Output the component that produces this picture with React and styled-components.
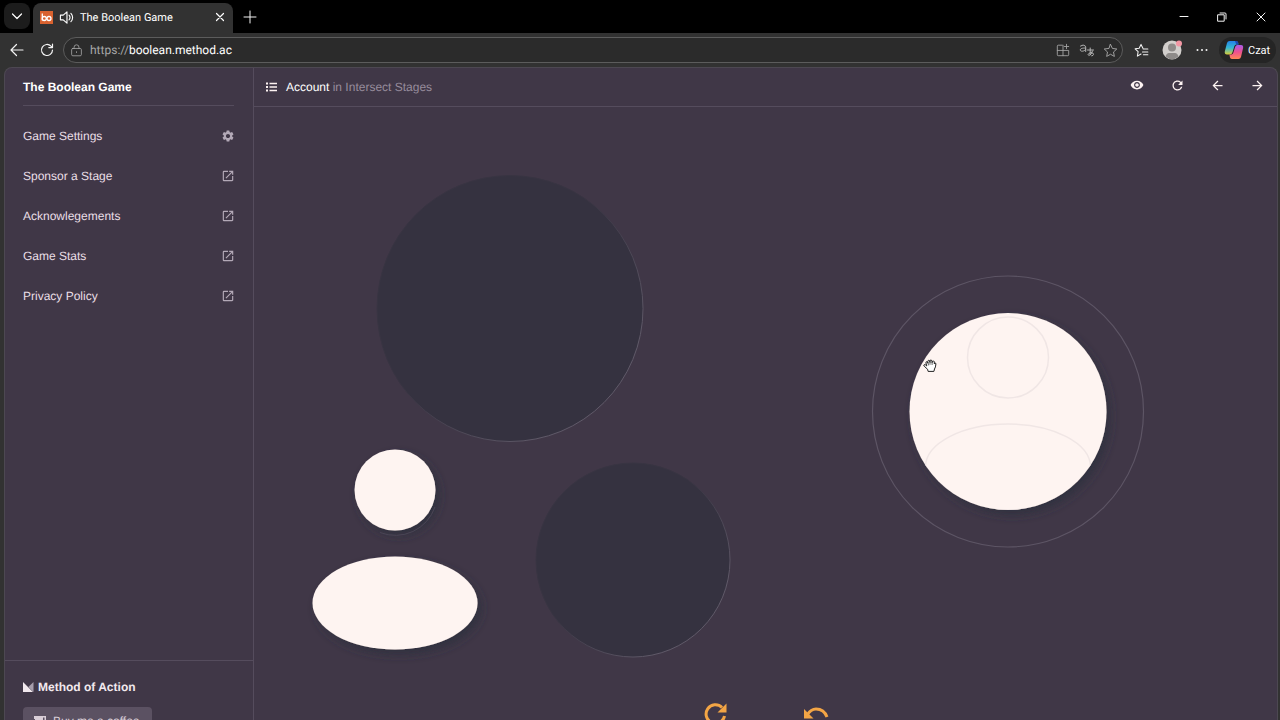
import React from "react";
import styled, { createGlobalStyle } from "styled-components";
import {
  MdSettings,
  MdOpenInNew,
  MdVisibility,
  MdRefresh,
  MdArrowBack,
  MdArrowForward,
} from "react-icons/md";

const Global = createGlobalStyle`
  * { box-sizing: border-box; }
  html, body { margin: 0; height: 100%; overflow: hidden; background: #000; }
  #root { height: 100%; }
  button, input { font: inherit; color: inherit; border: 0; background: none; padding: 0; margin: 0; }
  svg { display: block; flex: none; }
`;

const Browser = styled.div`
  display: flex;
  flex-direction: column;
  min-height: calc(100vh + 40px);
  background: #323232;
  color: #fff;
  font-family: "Liberation Sans", Arial, sans-serif;
  text-rendering: geometricPrecision;
`;

const TabStrip = styled.header`
  display: flex;
  align-items: flex-end;
  height: 33px;
  background: #000;
  font-family: Roboto, "Open Sans", sans-serif;
`;

const TabSearch = styled.button`
  display: grid;
  place-items: center;
  width: 26px;
  height: 26px;
  margin: 0 3px 4px 4px;
  border-radius: 8px;
  background: #1c1c1c;
`;

const Tab = styled.div`
  display: flex;
  align-items: center;
  width: 200px;
  height: 30px;
  padding: 0 8px 2px 7px;
  border-radius: 8px 8px 0 0;
  background: #323232;
  font-size: 11px;
`;

const TabTitle = styled.span`
  flex: 1;
  margin-left: 6px;
  white-space: nowrap;
`;

const Favicon = styled.svg`
  margin-right: 6px;
`;

const PlainButton = styled.button`
  display: grid;
  place-items: center;
  width: ${(p) => p.$w || 30}px;
  height: ${(p) => p.$h || 30}px;
  color: ${(p) => p.$tone || "#f4f4f4"};
`;

const WindowControls = styled.div`
  display: flex;
  margin-left: auto;
  align-self: center;
`;

const Toolbar = styled.nav`
  display: flex;
  align-items: center;
  height: 34px;
  padding: 0 4px 0 2px;
`;

const AddressBar = styled.div`
  display: flex;
  flex: 1;
  align-items: center;
  height: 26px;
  padding: 0 0 0 6px;
  margin-left: 1px;
  border: 1px solid #5c5c5c;
  border-radius: 13px;
  background: #2b2b2b;
  color: #a8a8a8;
  font-family: Roboto, "Open Sans", sans-serif;
  font-size: 12px;
`;

const Url = styled.span`
  flex: 1;
  margin-left: 7px;
  b { color: #fff; font-weight: 400; }
`;

const ChatButton = styled.button`
  display: flex;
  align-items: center;
  gap: 4px;
  width: 57px;
  height: 26px;
  padding-left: 5px;
  border-radius: 13px;
  background: #252525;
  font-family: Roboto, "Open Sans", sans-serif;
  font-size: 11px;
`;

const Site = styled.div`
  display: flex;
  flex: 1;
  margin: 0 2px 0 4px;
  border: 1px solid #4d4852;
  border-bottom: 0;
  border-radius: 8px 8px 0 0;
  background: #403747;
  font-size: 12px;
`;

const Sidebar = styled.aside`
  display: flex;
  flex-direction: column;
  width: 249px;
  border-right: 1px solid #554c5d;
`;

const Brand = styled.h1`
  height: 38px;
  margin: 0 19px 10px 18px;
  border-bottom: 1px solid #554c5d;
  font-size: 12px;
  line-height: 38px;
`;

const Menu = styled.ul`
  list-style: none;
  margin: 0;
  padding: 0;
`;

const MenuLink = styled.a`
  display: flex;
  align-items: center;
  justify-content: space-between;
  height: 40px;
  padding: 0 18px;
  color: #eadfe6;
  text-decoration: none;
  svg { color: #b3a9b7; }
`;

const SideFooter = styled.footer`
  height: 100px;
  margin-top: auto;
  padding: 16px 18px 0;
  border-top: 1px solid #554c5d;
`;

const Studio = styled.a`
  display: flex;
  align-items: center;
  gap: 4px;
  height: 20px;
  color: #f2e9ee;
  font-weight: 700;
  text-decoration: none;
`;

const CoffeeLink = styled.a`
  display: inline-flex;
  align-items: center;
  gap: 7px;
  height: 28px;
  margin-top: 10px;
  padding: 0 12px 0 11px;
  border-radius: 4px;
  background: #5b5162;
  color: #d9ced7;
  text-decoration: none;
`;

const Main = styled.main`
  display: flex;
  flex: 1;
  flex-direction: column;
  min-width: 0;
`;

const StageBar = styled.div`
  display: flex;
  align-items: center;
  height: 39px;
  padding: 0 0 0 12px;
  border-bottom: 1px solid #554c5d;
`;

const StageTitle = styled.h2`
  flex: 1;
  margin: 0 0 0 8px;
  font-size: 12px;
  font-weight: 400;
  color: #978c9c;
  b { color: #fff; font-weight: 400; }
`;

const StageButton = styled.button`
  display: grid;
  place-items: center;
  align-self: flex-start;
  width: 40px;
  height: 34px;
  color: #fdf3f2;
`;

const Board = styled.svg`
  width: 100%;
  height: auto;
`;

const Actions = styled.div`
  display: flex;
  justify-content: center;
  gap: 72px;
  padding-top: 2px;
`;

const ActionButton = styled.button`
  display: grid;
  place-items: center;
  width: 28px;
  height: 28px;
  color: #f3a545;
`;

const Stroke = ({ size = 16, width = 1, children, box = 16 }) => (
  <svg width={size} height={size} viewBox={`0 0 ${box} ${box}`} fill="none" stroke="currentColor" strokeWidth={width} strokeLinecap="round" strokeLinejoin="round" aria-hidden="true">
    {children}
  </svg>
);

const links = ["Sponsor a Stage", "Acknowlegements", "Game Stats", "Privacy Policy"];

function BrowserChrome() {
  return (
    <>
      <TabStrip>
        <TabSearch aria-label="Search tabs">
          <Stroke size={12} box={12} width={1.2}><path d="M1.500 4l4.500 4.500L10.500 4" /></Stroke>
        </TabSearch>
        <Tab>
          <Favicon width="13" height="13" viewBox="0 0 13 13" aria-hidden="true">
            <rect width="13" height="13" fill="#d9622f" />
            <g fill="none" stroke="#fff" strokeWidth="1.300">
              <path d="M2.300 2.500v7" />
              <circle cx="4.300" cy="7.500" r="2" />
              <circle cx="9" cy="7.500" r="2" />
            </g>
          </Favicon>
          <Stroke size={15} width={1.2}>
            <path d="M1.500 5.500h3L8.500 2v12L4.500 10.500h-3zM10.700 5.500a3.500 3.500 0 0 1 0 5M12.700 3.500a6.500 6.500 0 0 1 0 9" />
          </Stroke>
          <TabTitle>The Boolean Game</TabTitle>
          <Stroke size={10} box={10} width={1.2}><path d="M1.500 1.500l7 7M8.500 1.500l-7 7" /></Stroke>
        </Tab>
        <PlainButton $w={34} $h={32} aria-label="New tab">
          <Stroke size={14} box={14}><path d="M7 1v12M1 7h12" /></Stroke>
        </PlainButton>
        <WindowControls>
          <PlainButton $w={38} aria-label="Minimize"><Stroke size={10} box={10}><path d="M1 4.500h8" /></Stroke></PlainButton>
          <PlainButton $w={38} aria-label="Restore">
            <Stroke size={10} box={10}><path d="M1 2.800h6.200v6.400H1zM3 1h5q1 0 1 1v5" /></Stroke>
          </PlainButton>
          <PlainButton $w={39} aria-label="Close"><Stroke size={10} box={10}><path d="M1 1l8 8M9 1l-8 8" /></Stroke></PlainButton>
        </WindowControls>
      </TabStrip>
      <Toolbar>
        <PlainButton aria-label="Back"><Stroke width={1.2}><path d="M14 8H2M7.500 2.500L2 8l5.500 5.500" /></Stroke></PlainButton>
        <PlainButton aria-label="Reload">
          <Stroke width={1.2}><path d="M13.500 8A5.500 5.500 0 1 1 12 4.200L13.300 5.500M13.500 2v3.600H9.800" /></Stroke>
        </PlainButton>
        <AddressBar>
          <Stroke size={13}><rect x="2" y="5.500" width="12" height="9" rx="1.500" /><path d="M5 5.500V4a3 3 0 0 1 6 0v1.500M8 9.500v1" /></Stroke>
          <Url>https://<b>boolean.method.ac</b></Url>
          <PlainButton $w={24} $tone="#a5a5a5" aria-label="Install app">
            <Stroke size={14}><path d="M7 2.500H2.500a1 1 0 0 0-1 1v10a1 1 0 0 0 1 1h11a1 1 0 0 0 1-1V8.500H1.500M8 2.500v12M12 1.500v5M9.500 4h5" /></Stroke>
          </PlainButton>
          <PlainButton $w={23} $tone="#b5b5b5" aria-label="Translate">
            <Stroke size={16}>
              <path d="M1.500 4q3-2 4.800 0 .4.600.4 1.500v4M6.700 6C3 6 1.300 6.500 1.300 8s3.300 2 5.400-.5M8.500 8h6M11.200 6v5.500q0 1.500 1 2M13.500 9q-1 4-3.700 4.500-1.500-.5 0-2 2-1.500 4-.5 1.800 1.500-.5 3" />
            </Stroke>
          </PlainButton>
          <PlainButton $w={24} $tone="#a5a5a5" aria-label="Add to favorites">
            <Stroke size={15}><path d="M8 1.500l2 4.300 4.700.6-3.500 3.200.9 4.700L8 12l-4.100 2.300.9-4.700L1.300 6.400 6 5.800z" /></Stroke>
          </PlainButton>
        </AddressBar>
        <PlainButton $w={36} aria-label="Favorites">
          <Stroke size={15} width={1.1}><path d="M9.500 5.500L7.500 1.500l-2 4-4.300.7 3.200 3.100-.8 4.700 3.900-2.200M9.800 6.500h5M9 9.500h5.800M10 12.500h4.800" /></Stroke>
        </PlainButton>
        <PlainButton $w={26} aria-label="Profile">
          <svg width="20" height="20" viewBox="0 0 20 20" aria-hidden="true">
            <circle cx="10" cy="10" r="9.500" fill="#d2cfcc" />
            <circle cx="10" cy="7.500" r="4" fill="#8e8b89" />
            <path d="M3.500 16.500Q4.500 13 7 13h6q2.500 0 3.500 3.500-6.500 5.500-13 0" fill="#8e8b89" />
            <circle cx="17" cy="3.500" r="3" fill="#f297a4" />
          </svg>
        </PlainButton>
        <PlainButton $w={34} aria-label="More">
          <svg width="12" height="4" viewBox="0 0 12 4" fill="currentColor" aria-hidden="true"><circle cx="1.500" cy="2" r="1" /><circle cx="6" cy="2" r="1" /><circle cx="10.500" cy="2" r="1" /></svg>
        </PlainButton>
        <ChatButton>
          <svg width="20" height="20" viewBox="0 0 20 20" aria-hidden="true">
            <defs>
              <linearGradient id="cool" x1="0" y1="0" x2="0" y2="1"><stop stopColor="#2383e8" /><stop offset=".5" stopColor="#35b7d4" /><stop offset="1" stopColor="#d8cc36" /></linearGradient>
              <linearGradient id="warm" x1="0" y1="0" x2="0" y2="1"><stop stopColor="#a85be8" /><stop offset=".5" stopColor="#ed5090" /><stop offset="1" stopColor="#ff8755" /></linearGradient>
            </defs>
            <path d="M5.500 1h6.700q1.500 0 1.900 1.600l.4 1.900h-2.200q-1.500 0-2 1.800l-1.800 6q-.7 2.200-2.500 2.200H3Q.3 14.500.8 11.500L3 3q.6-2 2.500-2z" fill="url(#cool)" />
            <path d="M14.500 19H8.200q-1.700 0-2.200-1.600l-.6-2.900h1.900q1.500 0 2-1.800l1.900-6q.6-1.700 2.300-1.700H17q2.600 0 2.100 3L17 16.900Q16.400 19 14.500 19z" fill="url(#warm)" />
            <path d="M11 1h1.500q1.200 0 1.600 1.600l.4 1.900h-2.200z" fill="#1c48b8" />
          </svg>
          Czat
        </ChatButton>
      </Toolbar>
    </>
  );
}

function GameBoard() {
  return (
    <Board viewBox="254 107 1023 591" role="img" aria-label="Game board">
      <defs>
        <filter id="drop" x="-30%" y="-30%" width="160%" height="160%">
          <feDropShadow dx="4" dy="5" stdDeviation="5" floodColor="#2b2d3a" floodOpacity=".7" />
        </filter>
        <linearGradient id="rim" x1=".2" y1=".2" x2=".8" y2=".8">
          <stop offset=".4" stopColor="#383442" />
          <stop offset="1" stopColor="#5f5968" />
        </linearGradient>
        <clipPath id="face"><circle cx="1008" cy="411.500" r="98.500" /></clipPath>
      </defs>
      <g fill="#353240" stroke="url(#rim)">
        <circle cx="510" cy="308.500" r="133" />
        <circle cx="633" cy="560" r="97" />
      </g>
      <g fill="#fef4f1">
        <circle cx="395" cy="490" r="40.500" filter="url(#drop)" />
        <ellipse cx="395" cy="603" rx="82.500" ry="46.500" filter="url(#drop)" />
        <circle cx="1008" cy="411.500" r="98.500" filter="url(#drop)" />
      </g>
      <path d="M380 532.500A42 42 0 0 0 435 507" fill="none" stroke="#4a4555" />
      <circle cx="1008" cy="411.500" r="135.500" fill="none" stroke="#5d5565" strokeWidth="1.200" />
      <g fill="none" stroke="#f0e6e5" strokeWidth="1.500" clipPath="url(#face)">
        <circle cx="1008" cy="357.500" r="40.500" />
        <ellipse cx="1008" cy="467" rx="82.500" ry="43" />
      </g>
      <g transform="translate(923 359)" stroke="#222" strokeLinejoin="round" strokeLinecap="round">
        <path
          d="M4.300 10L1.200 7.200Q.2 5.700 1.500 5.500q.8 0 2.300 1.500L2.900 3.800q0-1.500 1.400-1L5 4.200l-.2-2Q5.300.6 6.500 1.600l.5 1.800V1.600q.9-1.300 1.900 0l.2 2 .5-1.300q1.300-.9 1.700.5v2l.5-.8q1.100-.3 1.100 1-.2 3.300-1.400 5l-.6 2.400H5.500z"
          fill="#fff"
        />
        <path d="M5 4.200l.5 1.800M7 3.400v2M9.100 3.600v2" strokeWidth=".7" />
      </g>
    </Board>
  );
}

export default function App() {
  return (
    <>
      <Global />
      <Browser>
        <BrowserChrome />
        <Site>
          <Sidebar>
            <Brand>The Boolean Game</Brand>
            <Menu>
              <li><MenuLink href="#settings">Game Settings<MdSettings size={14} /></MenuLink></li>
              {links.map((text) => (
                <li key={text}><MenuLink href="#more">{text}<MdOpenInNew size={14} /></MenuLink></li>
              ))}
            </Menu>
            <SideFooter>
              <Studio href="#studio">
                <svg width="11" height="10" viewBox="0 0 11 10" aria-hidden="true"><path d="M0 0l10 10H0z" fill="#f2e9ee" /><path d="M10.500 0v10L5.300 5z" fill="#a69dab" /></svg>
                Method of Action
              </Studio>
              <CoffeeLink href="#coffee">
                <svg width="12" height="10" viewBox="0 0 12 10" aria-hidden="true"><path d="M0 0h12v5H9v4H1V3H0zM9 1.500V4h1.500V1.500z" fill="currentColor" fillRule="evenodd" /></svg>
                Buy me a coffee
              </CoffeeLink>
            </SideFooter>
          </Sidebar>
          <Main>
            <StageBar>
              <svg width="12" height="10" viewBox="0 0 12 10" fill="#fdf3f2" aria-hidden="true">
                <path d="M0 .5h2v2H0zM0 4h2v2H0zM0 7.500h2v2H0zM3.500.7H11v1.500H3.500zM3.500 4.200H11v1.500H3.500zM3.500 7.700H11v1.500H3.500z" />
              </svg>
              <StageTitle><b>Account</b> in Intersect Stages</StageTitle>
              <StageButton aria-label="Preview"><MdVisibility size={14} /></StageButton>
              <StageButton aria-label="Restart"><MdRefresh size={15} /></StageButton>
              <StageButton aria-label="Previous stage"><MdArrowBack size={15} /></StageButton>
              <StageButton aria-label="Next stage"><MdArrowForward size={15} /></StageButton>
            </StageBar>
            <GameBoard />
            <Actions>
              <ActionButton aria-label="Reset">
                <svg width="28" height="28" viewBox="0 0 28 28" fill="none" aria-hidden="true"><path d="M20 7.500A9.300 9.300 0 1 0 22.500 16" stroke="currentColor" strokeWidth="3" /><path d="M24.500 3.500v9h-9z" fill="currentColor" /></svg>
              </ActionButton>
              <ActionButton aria-label="Undo">
                <svg width="28" height="28" viewBox="0 0 28 28" fill="none" aria-hidden="true"><path d="M5 15Q9 9 14 9q8 0 11 8" stroke="currentColor" strokeWidth="3" /><path d="M2 9v9.500h9.500z" fill="currentColor" /></svg>
              </ActionButton>
            </Actions>
          </Main>
        </Site>
      </Browser>
    </>
  );
}
